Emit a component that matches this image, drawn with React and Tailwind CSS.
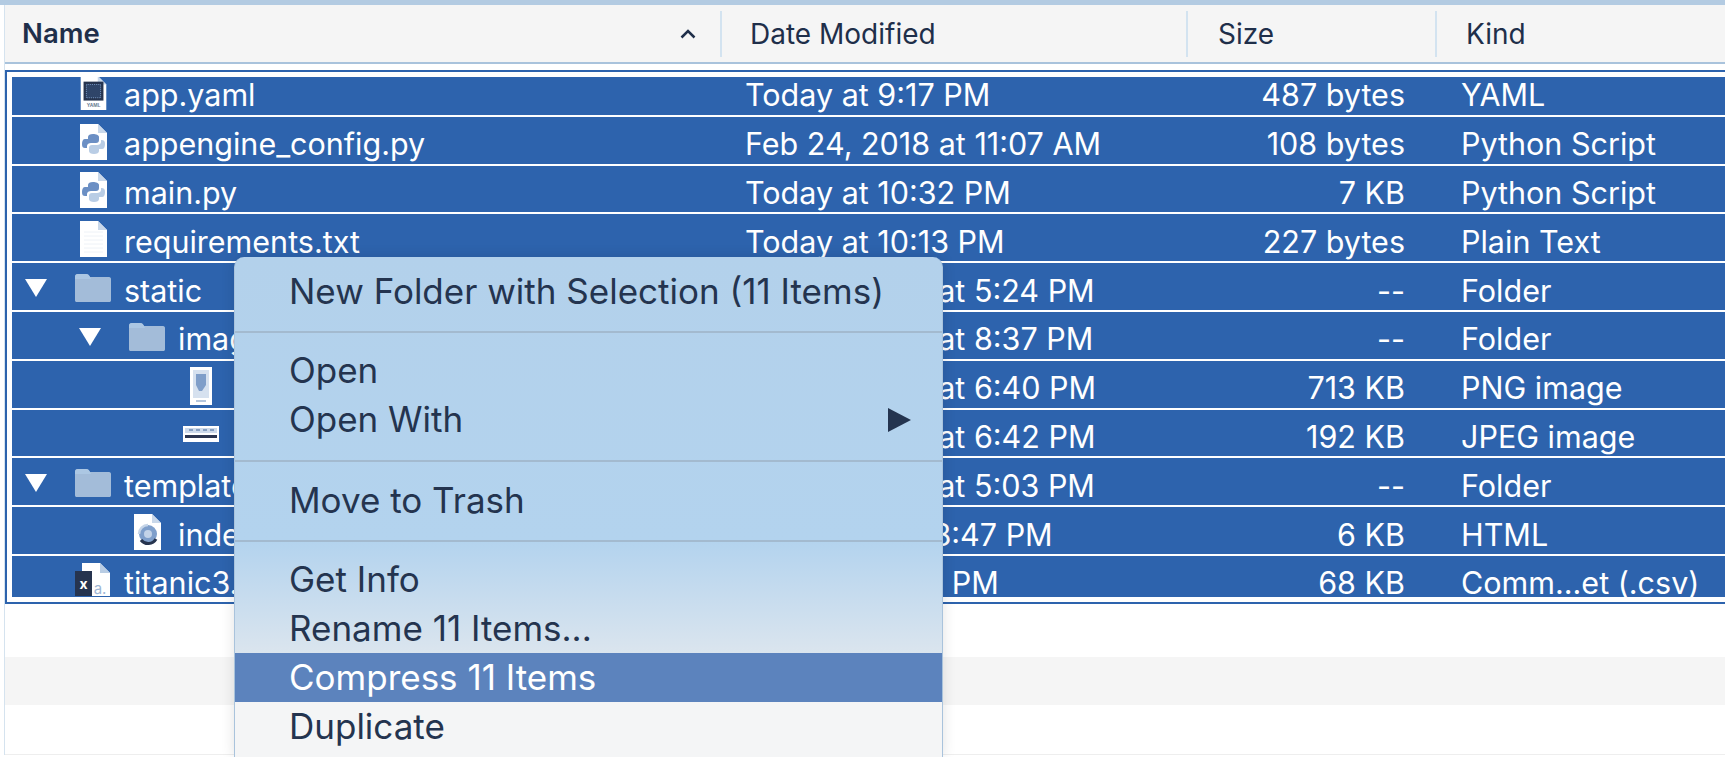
const PAGE = "M1 1H19L28 10V37H1Z";

function Doc({ children, className }) {
  return (
    <svg viewBox="0 0 29 38" className={className}>
      <path d={PAGE} fill="#fff" />
      <path d="M19 1V10H28Z" fill="#c9d8ea" />
      {children}
    </svg>
  );
}

const IconYaml = () => (
  <Doc className="w-[29px] h-[36px]">
    <rect x="4" y="7" width="21" height="20" fill="#26344f" />
    <rect x="7" y="10" width="15" height="14" fill="#2f4569" stroke="#7d9cc8" strokeWidth="1" strokeDasharray="1 1" />
    <text x="14.5" y="33.5" textAnchor="middle" fontSize="5" fontWeight="700" fill="#6f7f96" fontFamily="Inter, sans-serif">YAML</text>
  </Doc>
);

const IconPy = () => (
  <Doc className="w-[29px] h-[38px]">
    <path d="M14 11c-3 0-5 1-5 3v2H6c-2 0-3 2-3 5s1 4 3 4h2v-2c0-2 2-3 4-3h5c2 0 3-1 3-3v-3c0-2-3-3-6-3Z" fill="#6b8fc4" />
    <path d="M22 17v2c0 2-2 3-4 3h-5c-2 0-3 1-3 3v3c0 2 2 3 5 3 3 0 5-1 5-3v-2h3c2 0 3-2 3-5s-1-4-4-4Z" fill="#b9cde5" />
  </Doc>
);

const IconTxt = () => (
  <Doc className="w-[29px] h-[38px]">
    <g stroke="#eef2f7" strokeWidth="1">
      <path d="M5 12H24M5 16H24M5 20H24M5 24H24M5 28H24M5 32H24" />
    </g>
  </Doc>
);

const IconPng = () => (
  <svg viewBox="0 0 22 38" className="w-[22px] h-[38px]">
    <rect x="0" y="0" width="22" height="38" fill="#fff" />
    <rect x="3" y="3" width="16" height="28" fill="#d6e1ef" />
    <path d="M6 7H16V18L12 24H9L6 18Z" fill="#7f9ec9" />
    <rect x="6" y="33" width="10" height="2" fill="#b4c6dd" />
  </svg>
);

const IconJpeg = () => (
  <svg viewBox="0 0 36 16" className="w-[36px] h-[16px]">
    <rect width="36" height="16" fill="#fff" />
    <rect x="2" y="2" width="32" height="5" fill="#cddaeb" />
    <path d="M6 4H10M13 4H17M20 4H24M27 4H31" stroke="#6e8ab3" strokeWidth="1.5" />
    <rect x="2" y="9" width="32" height="3" fill="#2b3550" />
  </svg>
);

const IconHtml = () => (
  <Doc className="w-[29px] h-[38px]">
    <circle cx="15" cy="21" r="9" fill="#7f9fcb" />
    <path d="M6 21a9 9 0 0 1 9-9" stroke="#c6d5e8" strokeWidth="2.5" fill="none" />
    <path d="M8 27a9 9 0 0 0 15-1" stroke="#26344f" strokeWidth="3" fill="none" />
    <circle cx="15" cy="21" r="4" fill="#c3d3e8" />
  </Doc>
);

const IconCsv = () => (
  <svg viewBox="0 0 36 33" className="w-[36px] h-[33px] self-start mt-[2px]">
    <path d="M7 0H25L35 10V33H7Z" fill="#fff" />
    <path d="M25 0V10H35Z" fill="#b9cde4" />
    <text x="25" y="31" textAnchor="middle" fontSize="15" fill="#9fb7d6" fontFamily="Inter, sans-serif">a.</text>
    <rect x="0" y="8" width="17" height="25" fill="#26344f" />
    <text x="8.5" y="26" textAnchor="middle" fontSize="14" fontWeight="700" fill="#fff" fontFamily="Inter, sans-serif">x</text>
  </svg>
);

const IconFolder = () => (
  <svg viewBox="0 0 38 30" className="w-[38px] h-[30px]">
    <path d="M1 4C1 2 2 1 4 1H12C14 1 15 2 16 4H35C36.500 4 37 5 37 6V27C37 28.500 36.500 29 35 29H3C1.500 29 1 28.500 1 27Z" fill="#a3bcd9" />
    <path d="M1 4C1 2 2 1 4 1H12C14 1 15 2 16 4L17 6H1Z" fill="#acc7e3" />
  </svg>
);

const rows = [
  { name: "app.yaml", date: "Today at 9:17 PM", size: "487 bytes", kind: "YAML", Icon: IconYaml, indent: "pl-[13px]" },
  { name: "appengine_config.py", date: "Feb 24, 2018 at 11:07 AM", size: "108 bytes", kind: "Python Script", Icon: IconPy, indent: "pl-[13px]" },
  { name: "main.py", date: "Today at 10:32 PM", size: "7 KB", kind: "Python Script", Icon: IconPy, indent: "pl-[13px]" },
  { name: "requirements.txt", date: "Today at 10:13 PM", size: "227 bytes", kind: "Plain Text", Icon: IconTxt, indent: "pl-[13px]" },
  { name: "static", date: "Feb 25, 2018 at 5:24 PM", size: "--", kind: "Folder", Icon: IconFolder, indent: "pl-[13px]", open: true },
  { name: "images", date: "Feb 25, 2018 at 8:37 PM", size: "--", kind: "Folder", Icon: IconFolder, indent: "pl-[67px]", open: true },
  { name: "", date: "Feb 25, 2018 at 6:40 PM", size: "713 KB", kind: "PNG image", Icon: IconPng, indent: "pl-[121px]" },
  { name: "", date: "Feb 25, 2018 at 6:42 PM", size: "192 KB", kind: "JPEG image", Icon: IconJpeg, indent: "pl-[121px]" },
  { name: "templates", date: "Feb 25, 2018 at 5:03 PM", size: "--", kind: "Folder", Icon: IconFolder, indent: "pl-[13px]", open: true },
  { name: "index.html", date: "Yesterday at 8:47 PM", size: "6 KB", kind: "HTML", Icon: IconHtml, indent: "pl-[67px]" },
  { name: "titanic3.csv", date: "Today at 9:03 PM", size: "68 KB", kind: "Comm...et (.csv)", Icon: IconCsv, indent: "pl-[13px]" },
];

function Row({ r }) {
  const { Icon } = r;
  return (
    <div className="flex items-center h-[48.800px] shrink-0 border-b-2 border-white pt-[3px] bg-[#2d63ad] text-white text-[30.500px] leading-[36px] whitespace-nowrap">
      <div className={`flex items-center w-[733px] shrink-0 ${r.indent}`}>
        <div className="w-[22px] shrink-0 mr-[27px]">
          {r.open && (
            <svg viewBox="0 0 22 18" className="w-[22px] h-[18px]">
              <path d="M0 0H22L11 18Z" fill="#fff" />
            </svg>
          )}
        </div>
        <div className="w-[38px] h-[40px] shrink-0 mr-[12px] flex items-center justify-center">
          <Icon />
        </div>
        <span className="pt-[5px]">{r.name}</span>
      </div>
      <div className="w-[400px] shrink-0 pt-[5px]">{r.date}</div>
      <div className="w-[260px] shrink-0 text-right pt-[5px]">{r.size}</div>
      <div className="ml-[56px] pt-[5px]">{r.kind}</div>
    </div>
  );
}

function MenuItem({ children, active, arrow }) {
  return (
    <div className={`h-[49px] flex items-center justify-between pl-[54px] pr-[31px] whitespace-nowrap ${active ? "bg-[#5c83bd] text-white" : "text-[#24344f]"}`}>
      <span>{children}</span>
      {arrow && (
        <svg viewBox="0 0 23 24" className="w-[23px] h-[24px]">
          <path d="M0 0L23 12L0 24Z" fill="#24344f" />
        </svg>
      )}
    </div>
  );
}

const MenuSep = ({ className }) => <div className={`h-[2px] bg-[#a3bacf] ${className}`} />;

export default function App() {
  return (
    <div className="relative w-[1725px] h-[757px] overflow-hidden bg-white font-['Inter','Liberation_Sans',sans-serif]">
      <div className="h-[5px] bg-[#b3cbe2]" />
      <div className="ml-[4px] border-l border-[#d5e3ef]">
        <div className="flex items-center h-[59px] bg-[#f5f5f5] border-b-2 border-[#a9c3dc] text-[#1f2f4a] text-[28px]">
          <div className="flex items-center justify-between w-[715px] pl-[17px] pr-[24px] font-semibold">
            <span className="text-[27.500px]">Name</span>
            <svg viewBox="0 0 16 10" className="w-[16px] h-[10px]">
              <path d="M1.500 8.500L8 2L14.500 8.500" stroke="#1f2f4a" strokeWidth="2.500" fill="none" />
            </svg>
          </div>
          <div className="w-[466px] h-[46px] flex items-center pl-[28px] border-l-2 border-[#d3e3f0]">Date Modified</div>
          <div className="w-[249px] h-[46px] flex items-center pl-[30px] border-l-2 border-[#d3e3f0]">Size</div>
          <div className="h-[46px] flex items-center pl-[29px] border-l-2 border-[#d3e3f0]">Kind</div>
        </div>
        <div className="mt-[6px] border-y-2 border-l-2 border-[#2d63ad] pl-[5px] py-[5px]">
          <div className="h-[520px] overflow-hidden">
            <div className="-mt-[9px]">
              {rows.map((r, i) => (
                <Row key={i} r={r} />
              ))}
            </div>
          </div>
        </div>
        <div className="h-[53px]" />
        <div className="h-[48px] bg-[#f5f5f5]" />
        <div className="h-[50px] border-b border-[#eeeeee]" />
      </div>

      <div className="absolute left-[234px] top-[257px] w-[709px] h-[500px] rounded-t-[10px] border-x border-[#a9c3dc] shadow-[0_0_14px_rgba(0,0,0,0.12)] bg-[linear-gradient(180deg,#b3d1eb_0px,#b3d3ee_284px,#dbe5ee_397px,#f4f5f6_446px)] pt-[10px] text-[#24344f] text-[35px]">
        <MenuItem>New Folder with Selection (11 Items)</MenuItem>
        <MenuSep className="mt-[15px] mb-[13px]" />
        <MenuItem>Open</MenuItem>
        <MenuItem arrow>Open With</MenuItem>
        <MenuSep className="mt-[16px] mb-[14px]" />
        <MenuItem>Move to Trash</MenuItem>
        <MenuSep className="mt-[15px] mb-[13px]" />
        <MenuItem>Get Info</MenuItem>
        <MenuItem>Rename 11 Items...</MenuItem>
        <MenuItem active>Compress 11 Items</MenuItem>
        <MenuItem>Duplicate</MenuItem>
      </div>
    </div>
  );
}
